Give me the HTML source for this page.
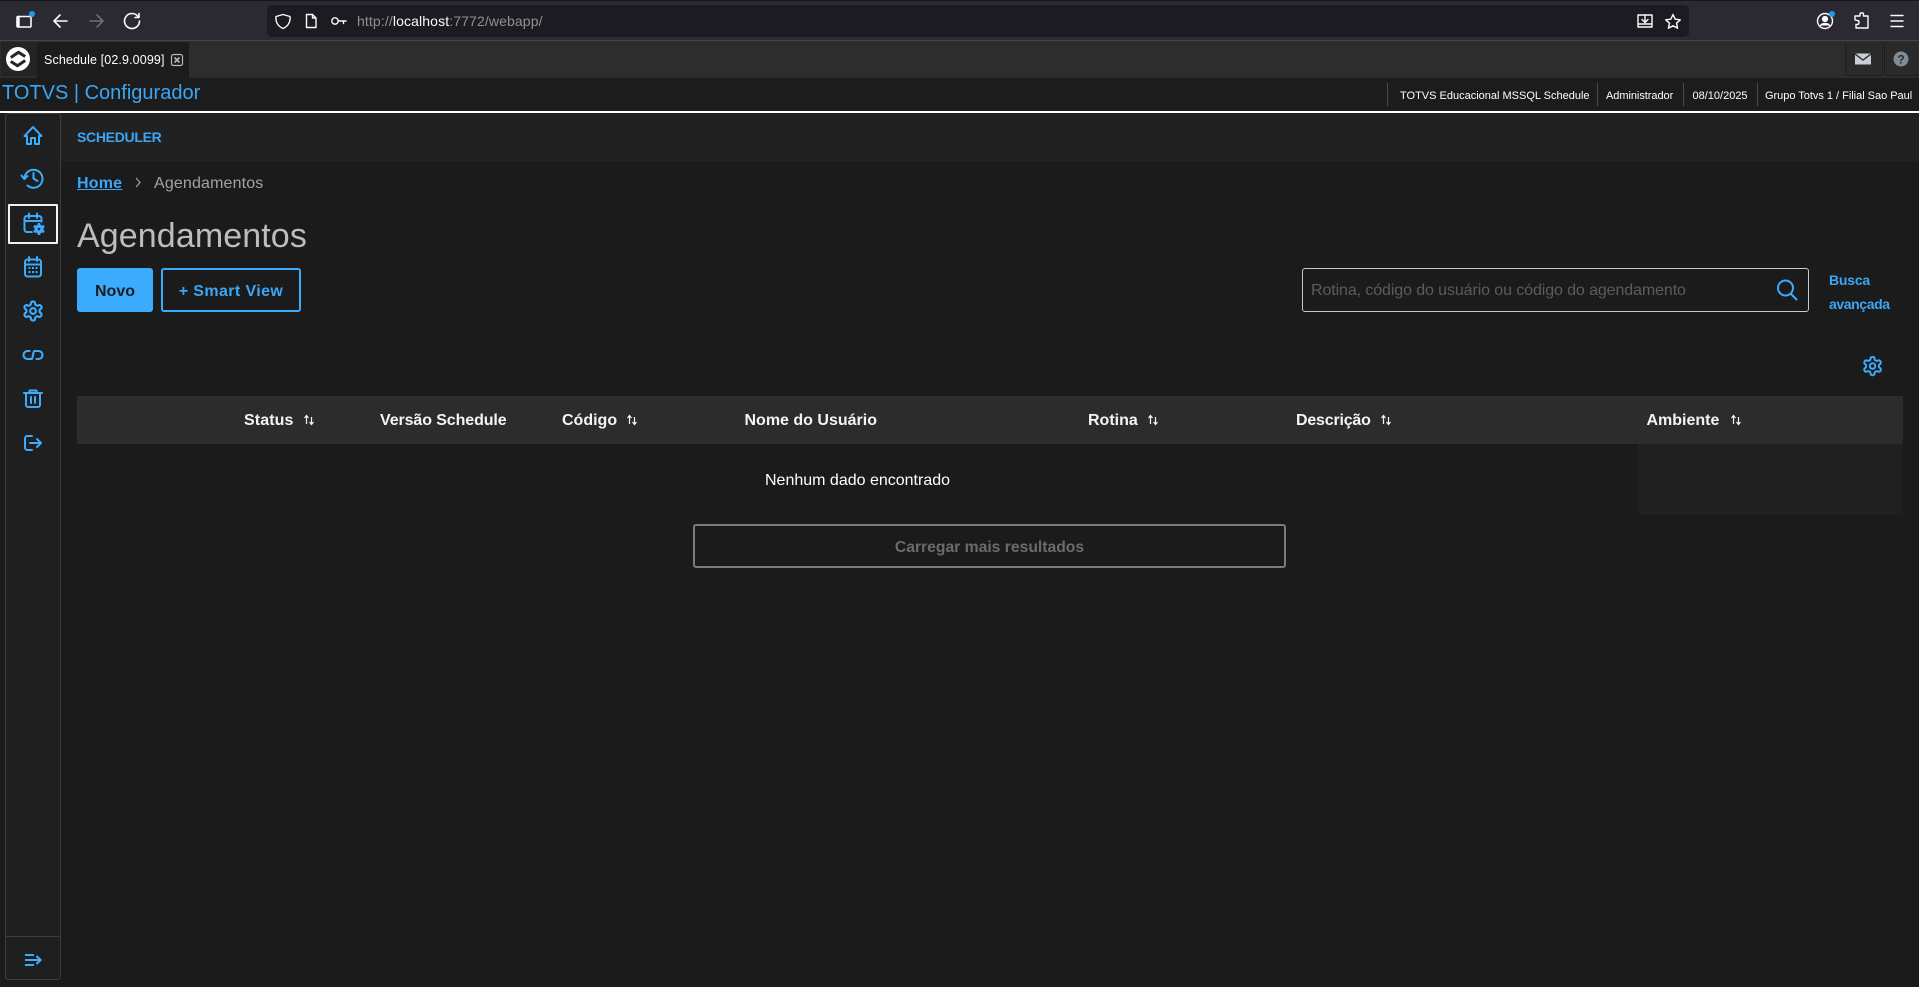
<!DOCTYPE html>
<html lang="pt-BR">
<head>
<meta charset="utf-8">
<title>Schedule</title>
<style>
html,body{margin:0;padding:0;width:1919px;height:987px;overflow:hidden;background:#1b1b1b;font-family:"Liberation Sans",sans-serif;}
.b{position:absolute;box-sizing:border-box;}
.t{position:absolute;white-space:nowrap;line-height:20px;height:20px;}
.h{font-weight:700;font-size:16px;color:#f4f4f4;top:411px;}
.s{font-size:11px;color:#fff;top:85.5px;line-height:20px;}
.sep{position:absolute;top:83px;width:1px;height:23px;background:#4a4a4a;}
svg.o{position:absolute;left:0;top:0;}
</style>
</head>
<body>
<!-- browser chrome -->
<div class="b" style="left:0;top:0;width:1919px;height:41px;background:#2b2a33;border-top:1px solid #17171b;border-bottom:1px solid #45454a;"></div>
<div class="b" style="left:267px;top:5px;width:1422px;height:32px;background:#1c1b22;border-radius:5px;"></div>
<div class="t" style="left:357px;top:11px;font-size:14px;letter-spacing:.12px;color:#8f8f94;">http://<span style="color:#fbfbfe">localhost</span>:7772/webapp/</div>

<!-- tab bar -->
<div class="b" style="left:0;top:41px;width:1919px;height:37px;background:#2d2d2d;"></div>
<div class="b" style="left:1px;top:42px;width:36px;height:34px;background:#242424;border-radius:2px;"></div>
<div class="b" style="left:37px;top:42px;width:152px;height:36px;background:#1c1c1c;border-radius:2px 2px 0 0;"></div>
<div class="t" style="left:44px;top:50px;font-size:12.5px;letter-spacing:.12px;color:#fff;">Schedule [02.9.0099]</div>
<div class="b" style="left:1845px;top:42px;width:38px;height:34px;background:#2a2a2a;border-right:1px solid #1f1f1f;border-bottom:1px solid #1f1f1f;border-left:1px solid #1f1f1f;border-radius:2px;"></div>
<div class="b" style="left:1884px;top:42px;width:35px;height:34px;background:#2a2a2a;border-left:1px solid #1f1f1f;border-bottom:1px solid #1f1f1f;border-radius:2px;"></div>

<!-- app header -->
<div class="b" style="left:0;top:78px;width:1919px;height:33px;background:#1c1c1c;"></div>
<div class="t" style="left:2px;top:82.5px;font-size:20px;color:#3aa6f5;">TOTVS | Configurador</div>
<div class="sep" style="left:1387px"></div>
<div class="t s" style="left:1400px;letter-spacing:0;">TOTVS Educacional MSSQL Schedule</div>
<div class="sep" style="left:1597px"></div>
<div class="t s" style="left:1606px;letter-spacing:-.05px;">Administrador</div>
<div class="sep" style="left:1683px"></div>
<div class="t s" style="left:1692.5px;">08/10/2025</div>
<div class="sep" style="left:1757px"></div>
<div class="t s" style="left:1765px;letter-spacing:-.02px;">Grupo Totvs 1 / Filial Sao Paul</div>
<div class="b" style="left:0;top:111px;width:1919px;height:2px;background:#fff;"></div>

<!-- sidebar -->
<div class="b" style="left:5px;top:113px;width:56px;height:867px;background:#1f1f1f;border:1px solid #3c3c3c;border-radius:3px;"></div>
<div class="b" style="left:6px;top:936px;width:54px;height:1px;background:#3c3c3c;"></div>
<div class="b" style="left:8px;top:204px;width:50px;height:40px;border:2px solid #eef3f8;border-radius:1px;"></div>

<!-- content -->
<div class="b" style="left:61px;top:113px;width:1858px;height:48px;background:#212121;"></div>
<div class="t" style="left:77px;top:127px;font-size:14px;font-weight:700;letter-spacing:-.3px;color:#3aa6f5;">SCHEDULER</div>
<div class="t" style="left:77px;top:174px;font-size:16px;font-weight:700;letter-spacing:.2px;color:#3aa6f5;text-decoration:underline;">Home</div>
<div class="t" style="left:154px;top:174px;font-size:16px;letter-spacing:.15px;color:#a3a3a3;">Agendamentos</div>
<div class="t" style="left:77px;top:216px;height:40px;line-height:40px;font-size:34px;letter-spacing:.1px;color:#bdbdbd;">Agendamentos</div>

<div class="b" style="left:77px;top:268px;width:76px;height:44px;background:#3babfd;border-radius:3px;"></div>
<div class="t" style="left:77px;top:281.5px;width:76px;text-align:center;font-size:16px;font-weight:700;color:#1c1c1c;">Novo</div>
<div class="b" style="left:161px;top:268px;width:140px;height:44px;border:2px solid #3babfd;border-radius:3px;"></div>
<div class="t" style="left:161px;top:281.5px;width:140px;text-align:center;font-size:16px;font-weight:700;letter-spacing:.4px;color:#3aa6f5;">+ Smart View</div>

<div class="b" style="left:1302px;top:268px;width:507px;height:44px;border:1px solid #c9c9c9;border-radius:3px;"></div>
<div class="t" style="left:1311px;top:281px;font-size:16px;letter-spacing:-.1px;color:#5c5c5c;">Rotina, código do usuário ou código do agendamento</div>
<div class="t" style="left:1829px;top:270px;font-size:14px;font-weight:700;letter-spacing:-.2px;color:#3aa6f5;">Busca</div>
<div class="t" style="left:1829px;top:294px;font-size:14px;font-weight:700;letter-spacing:-.4px;color:#3aa6f5;">avançada</div>

<div class="b" style="left:77px;top:396px;width:1826px;height:48px;background:#2c2c2c;"></div>
<div class="b" style="left:1638px;top:444px;width:265px;height:71px;background:#202020;"></div>
<div class="t h" style="left:244px;letter-spacing:.1px;">Status</div>
<div class="t h" style="left:380px;letter-spacing:-.1px;">Versão Schedule</div>
<div class="t h" style="left:562px;">Código</div>
<div class="t h" style="left:744.5px;">Nome do Usuário</div>
<div class="t h" style="left:1088px;">Rotina</div>
<div class="t h" style="left:1296px;letter-spacing:-.2px;">Descrição</div>
<div class="t h" style="left:1646.5px;">Ambiente</div>
<div class="t" style="left:765px;top:471px;font-size:16px;color:#fff;">Nenhum dado encontrado</div>
<div class="b" style="left:693px;top:524px;width:593px;height:44px;border:2px solid #7a7a7a;border-radius:3px;"></div>
<div class="t" style="left:693px;top:537.5px;width:593px;text-align:center;font-size:15.7px;font-weight:700;color:#6b6b6b;">Carregar mais resultados</div>

<!-- icons -->
<svg class="o" width="1919" height="987" viewBox="0 0 1919 987" fill="none" xmlns="http://www.w3.org/2000/svg">
<defs>
<g id="gear"><path d="M12.22 2h-.44a2 2 0 0 0-2 2v.18a2 2 0 0 1-1 1.73l-.43.25a2 2 0 0 1-2 0l-.15-.08a2 2 0 0 0-2.73.73l-.22.38a2 2 0 0 0 .73 2.73l.15.1a2 2 0 0 1 1 1.72v.51a2 2 0 0 1-1 1.74l-.15.09a2 2 0 0 0-.73 2.73l.22.38a2 2 0 0 0 2.73.73l.15-.08a2 2 0 0 1 2 0l.43.25a2 2 0 0 1 1 1.73V20a2 2 0 0 0 2 2h.44a2 2 0 0 0 2-2v-.18a2 2 0 0 1 1-1.73l.43-.25a2 2 0 0 1 2 0l.15.08a2 2 0 0 0 2.73-.73l.22-.39a2 2 0 0 0-.73-2.73l-.15-.08a2 2 0 0 1-1-1.74v-.5a2 2 0 0 1 1-1.74l.15-.09a2 2 0 0 0 .73-2.73l-.22-.38a2 2 0 0 0-2.73-.73l-.15.08a2 2 0 0 1-2 0l-.43-.25a2 2 0 0 1-1-1.73V4a2 2 0 0 0-2-2z"/><circle cx="12" cy="12" r="3"/></g>
<g id="sort" stroke="#f4f4f4" stroke-width="1.2"><path d="M-2.5 4V-4M-4.5 -2L-2.5 -4.5L-.5 -2"/><path d="M2.5 -3V4.5M.5 2L2.5 4.5L4.5 2"/></g>
</defs>

<!-- browser toolbar -->
<g stroke="#fbfbfe" stroke-width="1.6" stroke-linecap="round" stroke-linejoin="round">
<rect x="17" y="16.5" width="14" height="10.5" rx="1"/><path d="M18.5 17V26.5" stroke-width="2.4"/>
<path d="M67 21H54M60 15L54 21L60 27"/>
<path d="M103 21H90M97 15L103 21L97 27" stroke="#6f6e75"/>
<path d="M138 16.5A7.5 7.5 0 1 0 139.5 21M139 13.5V17.5H135"/>
</g>
<circle cx="32" cy="14" r="3" fill="#1e9bf0"/>
<g stroke="#fbfbfe" stroke-width="1.4" stroke-linejoin="round" stroke-linecap="round">
<path d="M283 14.5L290 16.5C290.5 22 288.5 26 283 28.5C277.5 26 275.5 22 276 16.5Z"/>
<path d="M306.5 14.5H312.5L316 18V27.5H306.5ZM312.5 14.5V18H316"/>
<circle cx="335" cy="21" r="3.2"/><path d="M338 21H346M343.5 21V23.5"/>
<path d="M1638 15H1652V27H1638ZM1638 24H1652M1645 16V22M1642 19.5L1645 22.5L1648 19.5"/>
<path d="M1673 14.5L1675.2 19.2L1680.3 19.8L1676.5 23.2L1677.6 28.2L1673 25.7L1668.4 28.2L1669.5 23.2L1665.7 19.8L1670.8 19.2Z"/>
<circle cx="1825" cy="21" r="7.5"/><circle cx="1825" cy="19" r="2.4" fill="#fbfbfe"/><path d="M1820.5 25.5C1822 23 1828 23 1829.5 25.5" fill="#fbfbfe"/>
<path d="M1855 20V16H1860V14C1860 12.5 1863.5 12.5 1863.5 14V16H1868V28H1856V24.5H1857.5C1859.5 24.5 1859.5 20.5 1857.5 20.5Z"/>
<path d="M1891 15.5H1903M1891 21H1903M1891 26.5H1903"/>
</g>
<circle cx="1832" cy="14" r="3" fill="#1e9bf0"/>

<!-- tab icons -->
<circle cx="18" cy="59" r="12" fill="#fff"/>
<g stroke="#262626" stroke-width="3" stroke-linejoin="round">
<path d="M10.8 57.5L18.5 52.3L25.2 56.5"/>
<path d="M10.8 61.5L17.5 65.7L25.2 60.5"/>
</g>
<rect x="171.5" y="54.5" width="11" height="11" rx="2" stroke="#b8b8b8" stroke-width="1.2"/>
<path d="M174.5 57.5L179.5 62.5M179.5 57.5L174.5 62.5" stroke="#b8b8b8" stroke-width="1.6"/>
<path d="M1855 53.5H1871V64.5H1855Z" fill="#c8ced3"/><path d="M1855 54L1863 60L1871 54" stroke="#2a2a2a" stroke-width="1.4"/>
<circle cx="1901" cy="59" r="7.5" fill="#7f8c95"/>
<text x="1901" y="63.5" font-family="Liberation Sans, sans-serif" font-size="12" font-weight="700" fill="#2a2a2a" text-anchor="middle">?</text>

<!-- sidebar icons -->
<g stroke="#3babfd" stroke-width="2" stroke-linejoin="round" stroke-linecap="round">
<path d="M33 127L24.5 136H27V144H31V138H35V144H39V136H41.5Z"/>
<path d="M24.5 179A9 9 0 1 1 27.5 185.5M21.5 175.5L24.3 179L27.5 176M33.5 173V178.5L37.5 181"/>
<path d="M32 232H27A2.5 2.5 0 0 1 24.5 229.5V218.5A2.5 2.5 0 0 1 27 216H39A2.5 2.5 0 0 1 41.5 218.5V222M29 213.5V218M37 213.5V218M24.5 221H41"/>
<rect x="25" y="259.5" width="16" height="17" rx="2.5"/><path d="M29 257V261M37 257V261M25 264.5H41"/>
<use href="#gear" stroke-width="2.3" transform="translate(21.6 299.6) scale(.95)"/>
<path d="M29.5 351H27.5A4 4 0 0 0 27.5 359H31.5C33 359 33 351 34.5 351H38.5A4 4 0 0 1 38.5 359H36.5" stroke-width="2.1"/>
<path d="M24 393H42M29.5 393V390.5H36.5V393M26 393V405A2 2 0 0 0 28 407H38A2 2 0 0 0 40 405V393M31 397V403M35 397V403"/>
<path d="M32 436H27.5A2.5 2.5 0 0 0 25 438.5V447.5A2.5 2.5 0 0 0 27.5 450H32M30 443H41M37 439L41 443L37 447"/>
</g>
<circle cx="39" cy="229" r="7" fill="#1f1f1f"/>
<path d="M39 223V235M33.8 226L44.2 232M44.2 226L33.8 232" stroke="#3babfd" stroke-width="2.6"/>
<circle cx="39" cy="229" r="4.6" fill="#3babfd"/><circle cx="39" cy="229" r="1.3" fill="#1f1f1f"/>
<g fill="#3babfd"><rect x="28.5" y="267" width="2" height="2"/><rect x="32" y="267" width="2" height="2"/><rect x="35.5" y="267" width="2" height="2"/><rect x="28.5" y="271" width="2" height="2"/><rect x="32" y="271" width="2" height="2"/><rect x="35.5" y="271" width="2" height="2"/></g>
<g stroke="#3babfd" stroke-width="2"><path d="M25 955H34M25 960H39M25 965H34"/><path d="M36.5 956L40.5 960L36.5 964" stroke-width="2.2"/></g>

<!-- breadcrumb chevron -->
<path d="M136 178L140 182.5L136 187" stroke="#a3a3a3" stroke-width="1.2"/>

<!-- search icon -->
<g stroke="#3babfd" stroke-width="2" stroke-linecap="round"><circle cx="1785.5" cy="288" r="7.5"/><path d="M1791 294L1796.5 299.5"/></g>

<!-- table settings gear -->
<g stroke="#3babfd" stroke-width="2.2"><use href="#gear" transform="translate(1861.5 355) scale(.92)"/></g>

<!-- sort icons -->
<use href="#sort" transform="translate(309 420)"/>
<use href="#sort" transform="translate(632 420)"/>
<use href="#sort" transform="translate(1153 420)"/>
<use href="#sort" transform="translate(1386 420)"/>
<use href="#sort" transform="translate(1736 420)"/>
</svg>
</body>
</html>
